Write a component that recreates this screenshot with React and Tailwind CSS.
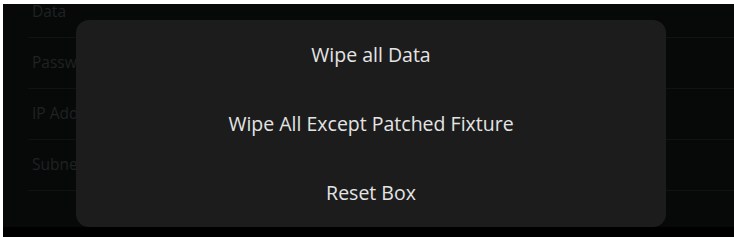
export default function App() {
  const rows = ['Data', 'Password', 'IP Address', 'Subnet Mask'];
  const actions = ['Wipe all Data', 'Wipe All Except Patched Fixture', 'Reset Box'];

  return (
    <div className="w-[734px] h-[237px] flex flex-col bg-white overflow-hidden" style={{ fontFamily: '"Open Sans", "Liberation Sans", sans-serif' }}>
      <div className="h-[4px] shrink-0" />
      <div className="flex flex-1 min-h-0">
        <div className="w-[3px] shrink-0" />
        <div className="flex-1 flex flex-col bg-[#070909] relative">
          <div className="flex-1 overflow-hidden">
            <div className="mt-[-17px] ml-[25px]">
              {rows.map((r) => (
                <div key={r} className="h-[51px] flex items-center pl-[4px] border-b border-[#101313] text-[15.5px] text-[#1f2222]">
                  {r}
                </div>
              ))}
            </div>
          </div>
          <div className="h-[10px] shrink-0 bg-black" />

          {/* modal */}
          <div className="absolute left-[73px] top-[16px] w-[590px] h-[207px] rounded-[13px] bg-[#1c1c1c] flex flex-col">
            {actions.map((a) => (
              <button key={a} className="h-[69px] flex items-center justify-center text-[19.5px] text-[#e4e4e4]">
                {a}
              </button>
            ))}
          </div>
        </div>
      </div>
    </div>
  );
}
